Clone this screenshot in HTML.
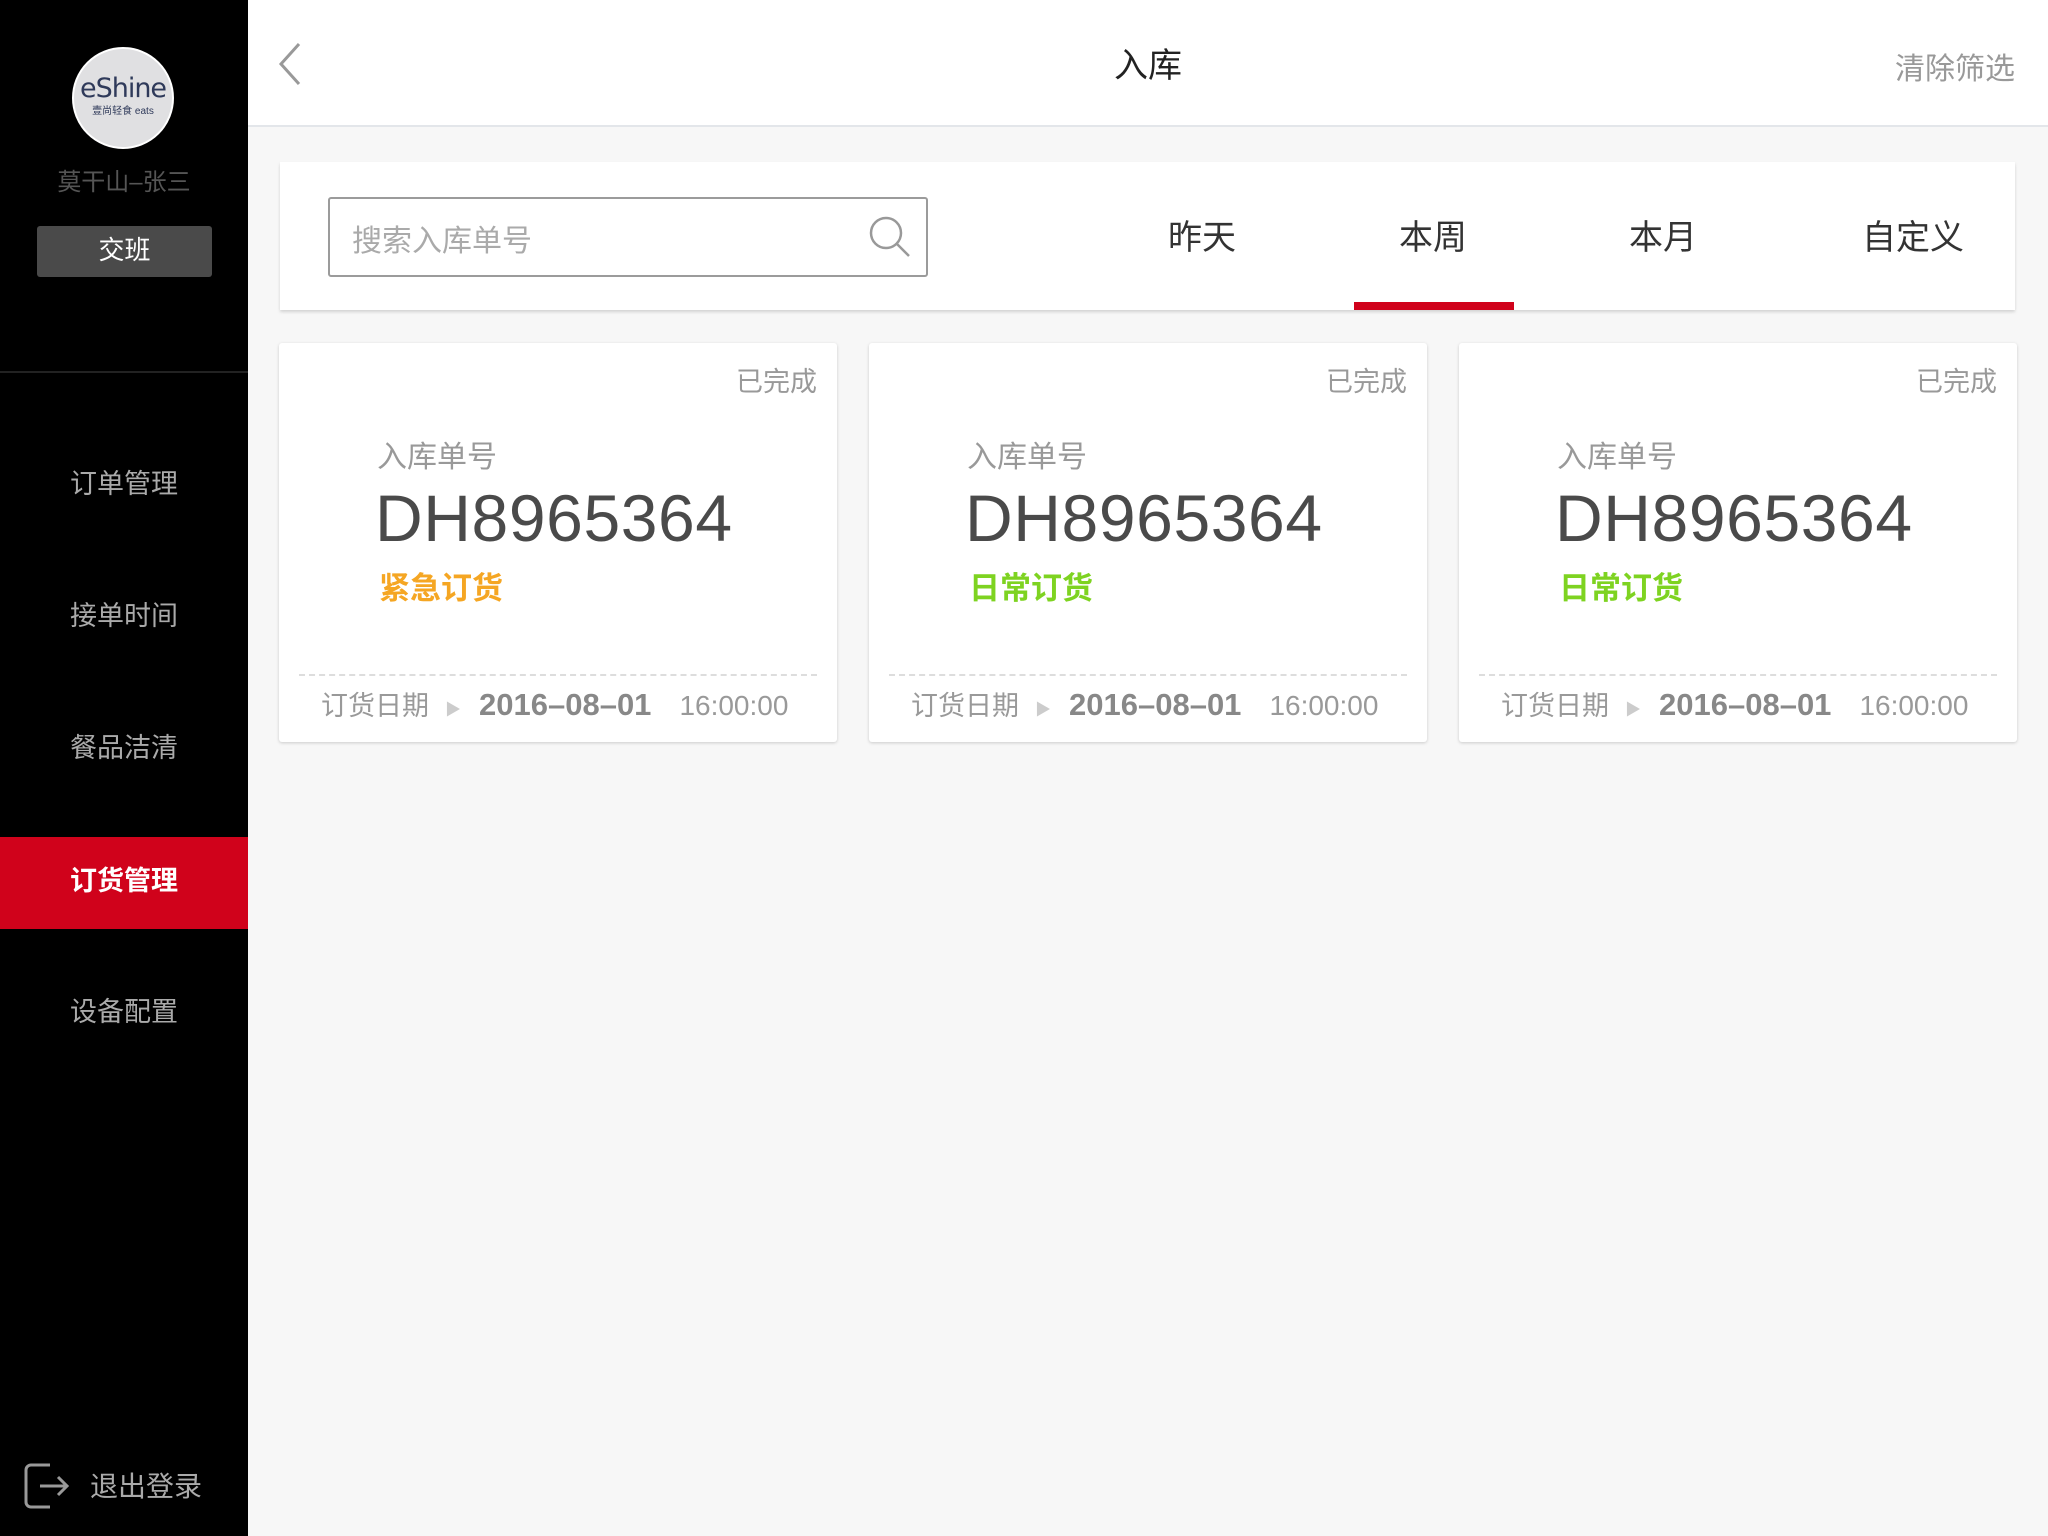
<!DOCTYPE html>
<html><head><meta charset="utf-8"><style>
*{margin:0;padding:0;box-sizing:border-box}
body{width:2048px;height:1536px;background:#f7f7f7;font-family:"Liberation Sans","Noto Sans CJK SC",sans-serif;position:relative;overflow:hidden}
.abs{position:absolute}
#side{left:0;top:0;width:248px;height:1536px;background:#000}
.logo{left:72px;top:47px;width:102px;height:102px;border-radius:50%;background:#e0e0e2;border:2px solid #fff;text-align:center;color:#2f3a5a;overflow:hidden}
.name{left:0;width:248px;top:162px;text-align:center;color:#555;font-size:24px}
.btn{left:37px;top:226px;width:175px;height:51px;background:#4a4a4a;border-radius:3px;color:#fff;font-size:26px;text-align:center;line-height:49px}
.hr{left:0;top:371px;width:248px;height:2px;background:#222}
.mi{left:0;width:248px;height:92px;line-height:88px;text-align:center;color:#aaa;font-size:27px}
.mi.act{background:#d0021b;color:#fff;font-weight:bold}
#head{left:248px;top:0;width:1800px;height:127px;background:#fff;border-bottom:2px solid #e3e6ea}
.t{color:#222;font-size:34px}
.filter{left:280px;top:162px;width:1735px;height:148px;background:#fff;box-shadow:0 2px 3px rgba(0,0,0,.15)}
.inp{left:48px;top:35px;width:600px;height:80px;border:2px solid #9b9b9b;border-radius:3px}
.tab{top:48px;font-size:34px;color:#333;transform:translateX(-50%)}
.card{top:343px;width:558px;height:399px;background:#fff;box-shadow:0 1px 3px rgba(0,0,0,.18);border-radius:3px}
.st{right:20px;top:17px;font-size:27px;color:#999}
.lb{left:98px;top:89px;font-size:30px;color:#999}
.no{left:96px;top:137px;font-size:66px;color:#4a4a4a;letter-spacing:0.6px}
.ty{left:100px;top:220px;font-size:31px;font-weight:bold}
.dash{left:20px;right:20px;top:331px;border-top:2px dashed #ddd}
.ft{left:42px;top:341px;font-size:27px;color:#999;white-space:nowrap;display:flex;align-items:baseline}
</style></head><body>
<div id="side" class="abs">
<div class="abs logo"><div style="font-size:27px;margin-top:24px;font-family:'DejaVu Sans',sans-serif;letter-spacing:-1px">eShine</div><div style="font-size:10px;margin-top:-2px">壹尚轻食 eats</div></div>
<div class="abs name">莫干山–张三</div>
<div class="abs btn">交班</div>
<div class="abs hr"></div>
<div class="abs mi" style="top:440px">订单管理</div>
<div class="abs mi" style="top:572px">接单时间</div>
<div class="abs mi" style="top:704px">餐品洁清</div>
<div class="abs mi act" style="top:837px">订货管理</div>
<div class="abs mi" style="top:968px">设备配置</div>
<svg class="abs" style="left:22px;top:1462px" width="50" height="48" viewBox="0 0 50 48" fill="none" stroke="#999" stroke-width="3"><path d="M28 3H9a5 5 0 0 0-5 5v32a5 5 0 0 0 5 5h19"/><path d="M18 24h27M36 15l9 9-9 9"/></svg>
<div class="abs" style="left:90px;top:1465px;color:#aaa;font-size:28px">退出登录</div>
</div>
<div id="head" class="abs">
<svg class="abs" style="left:30px;top:42px" width="24" height="44" viewBox="0 0 24 44" fill="none" stroke="#999" stroke-width="3"><path d="M21 2L3 22l18 20"/></svg>
<div class="abs t" style="left:900px;top:38px;width:0;white-space:nowrap;display:flex;justify-content:center">入库</div>
<div class="abs" style="right:33px;top:44px;color:#999;font-size:30px">清除筛选</div>
</div>
<div class="abs filter">
<div class="abs inp"><div class="abs" style="left:22px;top:17px;font-size:30px;color:#aaa">搜索入库单号</div>
<svg class="abs" style="left:538px;top:16px" width="44" height="44" viewBox="0 0 44 44" fill="none" stroke="#999" stroke-width="2.5"><circle cx="18" cy="18" r="15"/><path d="M29 29l12 12"/></svg></div>
<div class="abs tab" style="left:922px">昨天</div>
<div class="abs tab" style="left:1153px">本周</div>
<div class="abs tab" style="left:1383px">本月</div>
<div class="abs tab" style="left:1633px">自定义</div>
<div class="abs" style="left:1074px;top:140px;width:160px;height:8px;background:#d0021b"></div>
</div>
<div class="abs card" style="left:279px"><div class="abs st">已完成</div><div class="abs lb">入库单号</div><div class="abs no">DH8965364</div><div class="abs ty" style="color:#f5a623">紧急订货</div><div class="abs dash"></div><div class="abs ft">订货日期<span style="color:#ccc;font-size:16px;margin:0 18px 0 16px">▶</span><span style="font-size:31px;color:#888;font-weight:bold">2016–08–01</span><span style="margin-left:28px;font-size:28px">16:00:00</span></div></div>
<div class="abs card" style="left:869px"><div class="abs st">已完成</div><div class="abs lb">入库单号</div><div class="abs no">DH8965364</div><div class="abs ty" style="color:#7ed321">日常订货</div><div class="abs dash"></div><div class="abs ft">订货日期<span style="color:#ccc;font-size:16px;margin:0 18px 0 16px">▶</span><span style="font-size:31px;color:#888;font-weight:bold">2016–08–01</span><span style="margin-left:28px;font-size:28px">16:00:00</span></div></div>
<div class="abs card" style="left:1459px"><div class="abs st">已完成</div><div class="abs lb">入库单号</div><div class="abs no">DH8965364</div><div class="abs ty" style="color:#7ed321">日常订货</div><div class="abs dash"></div><div class="abs ft">订货日期<span style="color:#ccc;font-size:16px;margin:0 18px 0 16px">▶</span><span style="font-size:31px;color:#888;font-weight:bold">2016–08–01</span><span style="margin-left:28px;font-size:28px">16:00:00</span></div></div>
</body></html>
